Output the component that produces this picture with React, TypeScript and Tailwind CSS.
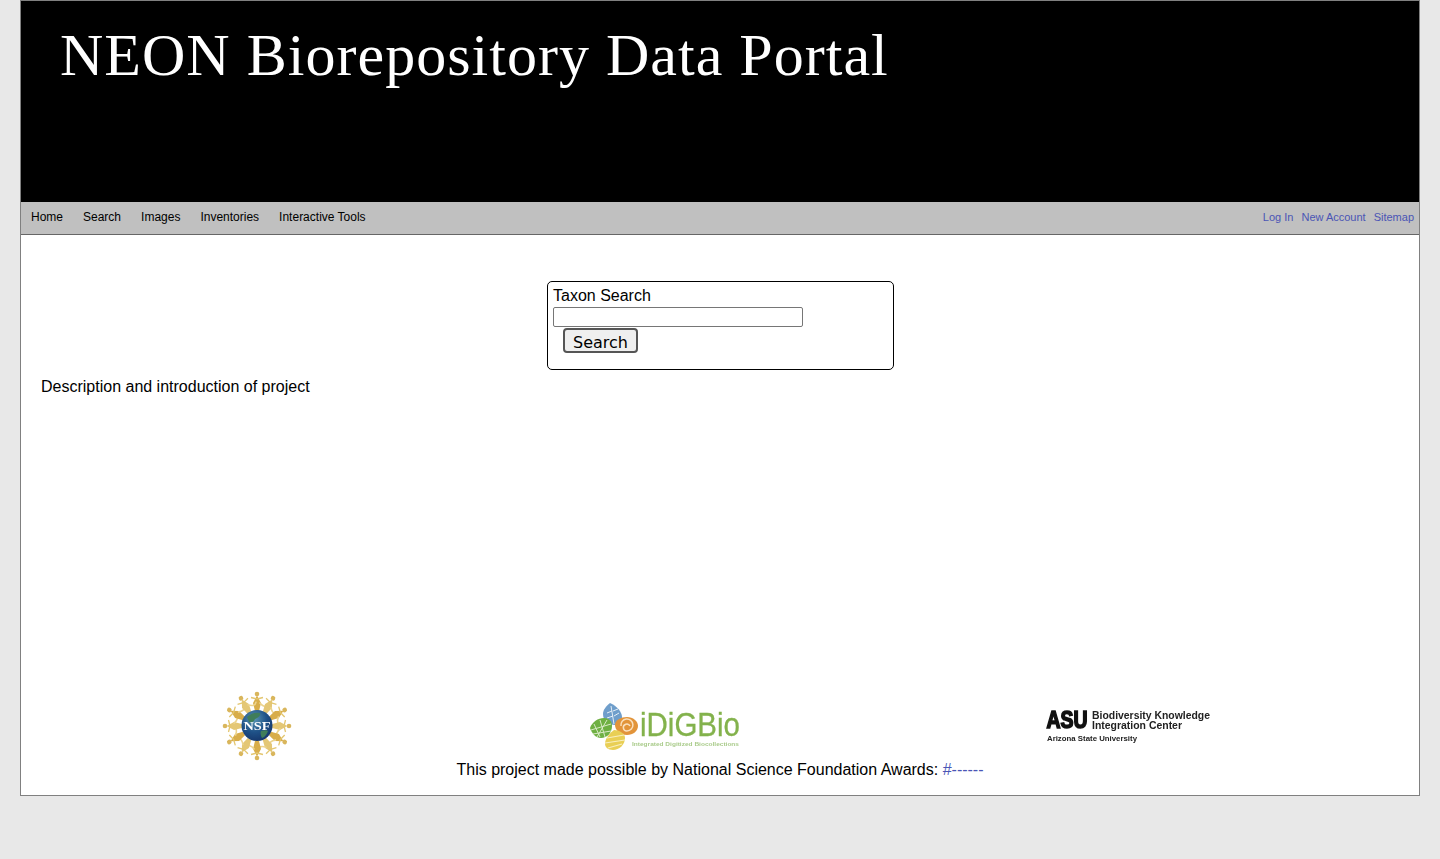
const sans = "font-['Liberation_Sans',Arial,sans-serif]";

function NsfLogo() {
  const spokes = Array.from({ length: 12 }, (_, i) => i * 30);
  return (
    <svg width="72" height="72" viewBox="0 0 72 72" className="blur-[0.5px]">
      <defs>
        <radialGradient id="globe" cx="40%" cy="30%" r="75%">
          <stop offset="0%" stopColor="#5b97b5" />
          <stop offset="55%" stopColor="#1f5288" />
          <stop offset="100%" stopColor="#15356a" />
        </radialGradient>
      </defs>
      {spokes.map((a) => (
        <g key={a} transform={`rotate(${a} 36 36)`}>
          <circle cx="36" cy="4" r="2.300" fill="#d9b65c" />
          <path d="M36 5.500L40 13l-2 8h-4l-2-8z" fill={a % 60 === 0 ? "#d8ad4a" : "#e4c775"} />
          <path d="M38.500 12.500Q43.500 19 47.500 14.500" stroke="#ecd48f" strokeWidth="1.600" fill="none" />
          <path d="M36 9L30 7.500M36 9L42 7.500" stroke="#e3c66f" strokeWidth="1.300" fill="none" />
        </g>
      ))}
      <circle cx="36" cy="35.500" r="15.500" fill="url(#globe)" />
      <path d="M26 27c4-4 9-5 13-4 1 3-3 5-5 6-1 3-4 4-6 3zM40 41c3-1 6-1 7 0-1 3-3 6-6 7-1-2-2-5-1-7z" fill="#3f7d5a" />
      <text x="36" y="40" textAnchor="middle" fill="#fff" fontSize="13" fontWeight="700" fontFamily="'Liberation Serif',serif" textLength="27" lengthAdjust="spacingAndGlyphs">NSF</text>
    </svg>
  );
}

function IdigbioLogo() {
  return (
    <svg width="154" height="50" viewBox="0 0 154 50" className="blur-[0.4px]">
      <path d="M22 2c7 3 12 9 12 14 0 4-2 7-7 8-6 0-12-4-12-11 0-4 3-8 7-11z" fill="#6f9ecb" />
      <path d="M23 5l3 18M24 10l-5 2M25 15l-6 2M25 10l5-2M26 15l5-3" stroke="#e5eef6" strokeWidth="1" fill="none" />
      <path d="M2 27c2-6 8-10 14-10 5 0 8 3 8 8 0 7-5 12-11 12-5 0-9-4-11-10z" fill="#6fb043" />
      <path d="M6 23l6 13M12 19l5 17M19 19l-10 17M3 29l20-6M5 33l18-3" stroke="#d8e9c6" strokeWidth="1" fill="none" />
      <path d="M27 24c0-5 6-8 12-8 6 0 11 4 11 9 0 5-5 9-11 9-7 0-12-5-12-10z" fill="#e2943a" />
      <path d="M33 25a6 6 0 1 1 6 5 3.500 3.500 0 1 1 3-5" stroke="#fae0bd" strokeWidth="1.500" fill="none" />
      <path d="M26 29c5 0 11 3 11 8 0 7-6 12-12 12-5 0-8-3-8-6 0-6 5-11 9-14z" fill="#e9cf55" />
      <path d="M19 37l17-3M17 42l20-3M20 47l14-4" stroke="#f8efc0" strokeWidth="1.200" fill="none" />
      <text x="52" y="35" fill="#83b24c" fontSize="33" stroke="#83b24c" strokeWidth="0.300" fontFamily="'Liberation Sans',sans-serif" textLength="100" lengthAdjust="spacingAndGlyphs">iDiGBio</text>
      <text x="44" y="44.500" fill="#a9cb8a" fontSize="5.500" fontWeight="700" fontFamily="'Liberation Sans',sans-serif" textLength="107" lengthAdjust="spacingAndGlyphs">Integrated Digitized Biocollections</text>
    </svg>
  );
}

function AsuLogo() {
  return (
    <svg width="165" height="34" viewBox="0 0 165 34" className="blur-[0.4px]">
      <text x="0.500" y="19" fill="#111" fontSize="23" fontWeight="700" stroke="#111" strokeWidth="1.600" fontFamily="'Liberation Sans',sans-serif" textLength="41" lengthAdjust="spacingAndGlyphs">ASU</text>
      <text x="46" y="10" fill="#222" fontSize="10" fontWeight="700" fontFamily="'Liberation Sans',sans-serif" textLength="118" lengthAdjust="spacingAndGlyphs">Biodiversity Knowledge</text>
      <text x="46" y="20" fill="#222" fontSize="10" fontWeight="700" fontFamily="'Liberation Sans',sans-serif" textLength="90" lengthAdjust="spacingAndGlyphs">Integration Center</text>
      <text x="1" y="31.500" fill="#222" fontSize="7.500" fontWeight="700" fontFamily="'Liberation Sans',sans-serif" textLength="90" lengthAdjust="spacingAndGlyphs">Arizona State University</text>
    </svg>
  );
}

export default function App() {
  const menu = ["Home", "Search", "Images", "Inventories", "Interactive Tools"];
  const links = ["Log In", "New Account", "Sitemap"];

  return (
    <div className={`min-h-[859px] bg-[#e8e8e8] ${sans} text-black`}>
      <div className="mx-[20px] h-[796px] flex flex-col border border-[#808080] bg-white">
        <div className="h-[201px] bg-black pl-[39px]">
          <h1 className="font-['Liberation_Serif','Times_New_Roman',serif] text-[60px] leading-[69px] text-white tracking-[1.02px] pt-[20px]">NEON Biorepository Data Portal</h1>
        </div>
        <div className="h-[33px] flex items-center justify-between bg-[#c0c0c0] border-b border-[#666666] pl-[10px] pr-[5px] pb-[2px] text-[12px]">
          <div className="flex gap-[20px]">
            {menu.map((item) => (
              <a key={item} className="text-black">{item}</a>
            ))}
          </div>
          <div className="flex gap-[8px]">
            {links.map((item) => (
              <a key={item} className="text-[#4a55b5] text-[11px]">{item}</a>
            ))}
          </div>
        </div>
        <div className="flex-1 flex flex-col">
          <div className="w-[347px] h-[89px] mt-[46px] ml-[526px] border border-black rounded-[5px] pl-[5px] pt-[5px] text-[16px] leading-[18px]">
            <div>Taxon Search</div>
            <input type="text" className="block w-[250px] h-[20px] mt-[2px] border border-[#767676] rounded-[2px] bg-white" />
            <button className="block ml-[10px] mt-[1px] w-[75px] h-[25px] pt-[4px] border-2 border-[#555555] rounded-[4px] bg-[#efefef] font-['DejaVu_Sans',sans-serif] text-[16px] leading-[18px]">Search</button>
          </div>
          <p className="ml-[20px] mt-[7px] text-[16px] leading-[20px]">Description and introduction of project</p>
          <div className="flex-1" />
          <div className="flex items-center pl-[200px]">
            <NsfLogo />
            <div className="ml-[295px]"><IdigbioLogo /></div>
            <div className="ml-[304px]"><AsuLogo /></div>
          </div>
          <p className="text-center text-[16px] leading-[18px] mt-[-1px] mb-[16px]">
            This project made possible by National Science Foundation Awards: <a className="text-[#4a55b5]">#------</a>
          </p>
        </div>
      </div>
    </div>
  );
}
